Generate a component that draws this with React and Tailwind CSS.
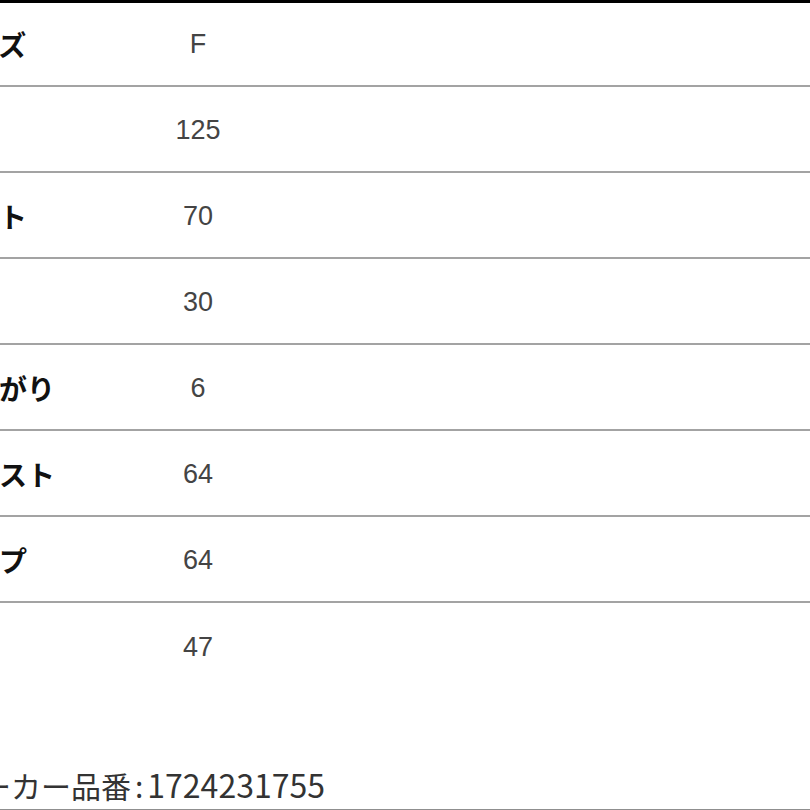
const rows = [
  { label: "サイズ", value: "F" },
  { label: "着丈", value: "125" },
  { label: "バスト", value: "70" },
  { label: "肩幅", value: "30" },
  { label: "肩下がり", value: "6" },
  { label: "ウエスト", value: "64" },
  { label: "ヒップ", value: "64" },
  { label: "裾幅", value: "47" },
];

export default function App() {
  return (
    <div className="w-[810px] h-[810px] overflow-hidden bg-white">
      <div className="h-[3px] bg-black" />
      <div className="-ml-[57px] w-[867px]">
        {rows.map((r, i) => (
          <div
            key={r.label}
            className={
              i === 0
                ? "flex items-center h-[84px] border-b-2 border-[#a3a3a3]"
                : i === rows.length - 1
                ? "flex items-center h-[86px] pt-[2px]"
                : "flex items-center h-[86px] pt-[2px] border-b-2 border-[#a3a3a3]"
            }
          >
            <div className="w-[195px] shrink-0 text-[28px] font-bold text-[#111] font-['Noto_Sans_CJK_JP',sans-serif]">
              {r.label}
            </div>
            <div className="w-[120px] shrink-0 text-center text-[27px] text-[#444] font-['Liberation_Sans','Noto_Sans_CJK_JP',sans-serif]">
              {r.value}
            </div>
          </div>
        ))}
        <div className="pt-[76px] pb-[5px] pl-[8px] border-b-2 border-[#8f8f8f]">
          <p className="text-[30px] leading-[38px] text-[#333] font-['Noto_Sans_CJK_JP',sans-serif]">
            メーカー品番<span className="mx-[4px]">:</span>
            <span className="text-[32px]">1724231755</span>
          </p>
        </div>
      </div>
    </div>
  );
}
